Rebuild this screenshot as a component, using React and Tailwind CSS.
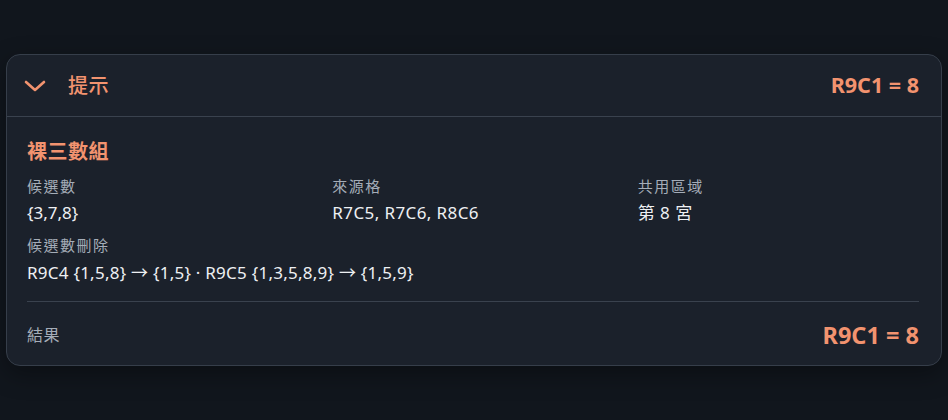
import React from "react";

export default function App() {
  const font = { fontFamily: '"Noto Sans", "Noto Sans CJK TC", sans-serif' };
  return (
    <div className="w-[948px] h-[420px] bg-[#11161d] pt-[54px] px-[6px]" style={font}>
      <div className="rounded-[14px] border border-[#363e4a] bg-[#1b212b] shadow-[0_8px_24px_rgba(0,0,0,0.35)]">
        <div className="h-[62px] flex items-center justify-between pl-[16px] pr-[22px] border-b border-[#3a424e]">
          <div className="flex items-center gap-[21px]">
            <svg width="24" height="24" viewBox="0 0 24 24" fill="none" stroke="#f2936f" strokeWidth="2.6" strokeLinecap="round" strokeLinejoin="round">
              <path d="M3 8l9 8 9-8" />
            </svg>
            <span className="text-[20px] font-medium text-[#f2936f] tracking-[0.5px]">提示</span>
          </div>
          <span className="text-[21.5px] font-bold text-[#f2936f]">R9C1 = 8</span>
        </div>
        <div className="pl-[20px] pr-[22px] pt-[21px] pb-[15px]">
          <div className="text-[20px] font-bold text-[#f2936f] leading-[28px] tracking-[0.5px]">裸三數組</div>
          <div className="grid grid-cols-3 gap-x-6 mt-[9px]">
            <div>
              <div className="text-[15px] text-[#a5adb8] leading-[22px] tracking-[1.5px]">候選數</div>
              <div className="text-[17px] text-[#eef0f3] leading-[26px] mt-[3px]">{"{3,7,8}"}</div>
            </div>
            <div>
              <div className="text-[15px] text-[#a5adb8] leading-[22px] tracking-[1.5px]">來源格</div>
              <div className="text-[17px] text-[#eef0f3] leading-[26px] mt-[3px] tracking-[0.4px]">R7C5, R7C6, R8C6</div>
            </div>
            <div>
              <div className="text-[15px] text-[#a5adb8] leading-[22px] tracking-[1.5px]">共用區域</div>
              <div className="text-[17px] text-[#eef0f3] leading-[26px] mt-[3px] tracking-[0.5px]">第 8 宮</div>
            </div>
          </div>
          <div className="mt-[8px]">
            <div className="text-[15px] text-[#a5adb8] leading-[22px] tracking-[1.5px]">候選數刪除</div>
            <div className="text-[17px] text-[#eef0f3] leading-[26px] mt-[4px] tracking-[0.25px]">
              {"R9C4 {1,5,8} → {1,5} · R9C5 {1,3,5,8,9} → {1,5,9}"}
            </div>
          </div>
          <div className="border-t border-[#3a424e] mt-[15px] pt-[17px] flex items-center justify-between h-[49px]">
            <span className="text-[16px] text-[#a5adb8] leading-[32px] tracking-[0.5px]">結果</span>
            <span className="text-[23.5px] font-bold text-[#f2936f] leading-[32px]">R9C1 = 8</span>
          </div>
        </div>
      </div>
    </div>
  );
}
